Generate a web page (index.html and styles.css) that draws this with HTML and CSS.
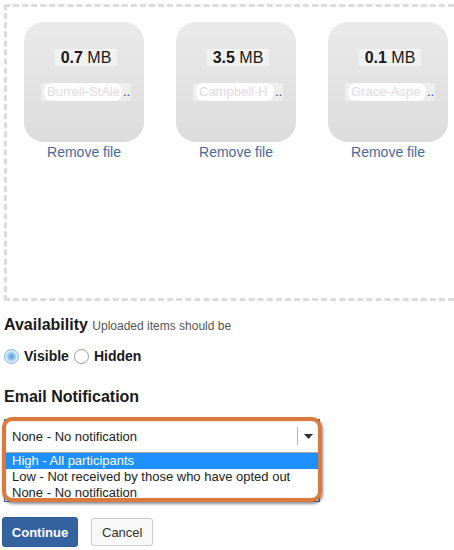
FILE: index.html
```html
<!DOCTYPE html>
<html>
<head>
<meta charset="utf-8">
<link rel="stylesheet" href="styles.css">
</head>
<body>
<div class="dropzone">
  <div class="previews">
    <div class="preview">
      <div class="thumb">
        <div class="size"><span><strong>0.7</strong> MB</span></div>
        <div class="fname"><span class="pill">Burrell-StAle</span><span class="dots">..</span></div>
      </div>
      <a class="remove" href="#">Remove file</a>
    </div>
    <div class="preview">
      <div class="thumb">
        <div class="size"><span><strong>3.5</strong> MB</span></div>
        <div class="fname"><span class="pill">Campbell-H</span><span class="dots">..</span></div>
      </div>
      <a class="remove" href="#">Remove file</a>
    </div>
    <div class="preview">
      <div class="thumb">
        <div class="size"><span><strong>0.1</strong> MB</span></div>
        <div class="fname"><span class="pill">Grace-Aspe</span><span class="dots">..</span></div>
      </div>
      <a class="remove" href="#">Remove file</a>
    </div>
  </div>
</div>

<div class="form">
  <h3 class="title">Availability <span class="hint">Uploaded items should be</span></h3>
  <div class="radios">
    <label class="radio"><input type="radio" name="avail" checked><span>Visible</span></label>
    <label class="radio"><input type="radio" name="avail"><span>Hidden</span></label>
  </div>

  <h3 class="title email">Email Notification</h3>
  <div class="select-wrap">
    <div class="select">
      <span class="value">None - No notification</span>
      <span class="sep"></span>
      <svg class="arrow" width="9" height="5" viewBox="0 0 9 5"><path d="M0 0H9L4.5 5Z" fill="#333"/></svg>
    </div>
    <ul class="listbox">
      <li class="active">High - All participants</li>
      <li>Low - Not received by those who have opted out</li>
      <li>None - No notification</li>
    </ul>
    <div class="callout"></div>
  </div>

  <div class="actions">
    <button class="btn primary">Continue</button>
    <button class="btn">Cancel</button>
  </div>
</div>
</body>
</html>
```

FILE: styles.css
```css
html, body {
  margin: 0;
  padding: 0;
  overflow: hidden;
  background: #fff;
  font-family: "Liberation Sans", Arial, sans-serif;
  color: #222;
}

.dropzone {
  margin: 4px 0 0 4px;
  width: calc(100% - 4px);
  height: 297px;
  box-sizing: border-box;
  border: 3px dashed #dcdcdc;
  border-right: none;
}

.previews {
  display: flex;
  gap: 32px;
  padding: 15px 0 0 17px;
}

.preview {
  width: 120px;
  display: flex;
  flex-direction: column;
  align-items: center;
}

.thumb {
  width: 120px;
  height: 120px;
  box-sizing: border-box;
  border-radius: 20px;
  background: linear-gradient(to bottom, #eaeaea, #dcdcdc);
  padding: 24px 0 0 17px;
}

.size {
  width: 90px;
  text-align: center;
  font-size: 16px;
  line-height: 24px;
  margin-bottom: 13px;
  color: #1a1a1a;
}

.size span {
  background: rgba(255, 255, 255, 0.45);
  padding: 0 6px;
}

.fname {
  display: flex;
  align-items: center;
  width: 90px;
  height: 18px;
  box-sizing: border-box;
  padding-left: 3px;
  white-space: nowrap;
  background: rgba(255, 255, 255, 0.4);
  font-size: 13px;
  line-height: 18px;
}

.pill {
  flex: none;
  width: 78px;
  box-sizing: border-box;
  padding: 0 3px;
  border-radius: 8px;
  background: rgba(255, 255, 255, 0.85);
  color: #e2dce2;
}

.dots {
  color: #1e4590;
  padding-left: 1px;
}

.remove {
  margin-top: 2px;
  font-size: 14px;
  line-height: 16px;
  color: #4a68a0;
  text-decoration: none;
}

.form {
  padding-left: 4px;
}

.title {
  margin: 14px 0 0 0;
  font-size: 16px;
  line-height: 20px;
  font-weight: bold;
  color: #1a1a1a;
}

.hint {
  font-size: 12px;
  font-weight: normal;
  color: #555;
}

.radios {
  display: flex;
  align-items: center;
  margin-top: 11px;
  height: 18px;
  gap: 5px;
}

.radio {
  display: flex;
  align-items: center;
  gap: 5px;
  font-size: 14px;
  font-weight: bold;
  line-height: 18px;
  color: #1a1a1a;
}

.radio input {
  -webkit-appearance: none;
  appearance: none;
  margin: 0;
  width: 15px;
  height: 15px;
  border-radius: 50%;
  border: 1px solid #9a9a9a;
  background: #fff;
  box-sizing: border-box;
}

.radio input:checked {
  border-color: #7eb4e2;
  background: radial-gradient(circle, #4f9ad8 0, #7fb8e6 2.5px, #d8e9f7 5.5px, #eef5fb 7px);
}

.email {
  margin-top: 22px;
}

.select-wrap {
  position: relative;
  margin-top: 12px;
  width: 316px;
  border: 1px solid #3a6cb0;
  box-sizing: border-box;
  background: #fff;
}

.select {
  display: flex;
  align-items: center;
  height: 32px;
  padding: 0 6px 0 7px;
  font-size: 13px;
  border-bottom: 1px solid #a8a8a8;
}

.value {
  flex: 1;
  padding-top: 1px;
}

.sep {
  width: 1px;
  height: 18px;
  background: #b4b4b4;
  margin-right: 6px;
}

.listbox {
  list-style: none;
  margin: 0;
  padding: 0;
  font-size: 13px;
}

.listbox li {
  height: 16px;
  line-height: 16px;
  padding-left: 7px;
  white-space: nowrap;
}

.listbox li.active {
  background: #1e90ff;
  color: #fff;
}

.callout {
  position: absolute;
  left: -3px;
  top: -3px;
  width: 320px;
  height: 85px;
  box-sizing: border-box;
  border: 4px solid #da7a3c;
  border-radius: 10px;
  box-shadow: 1px 2px 3px rgba(20, 30, 50, 0.5), inset 0 0 1px rgba(90, 40, 10, 0.5);
}

.actions {
  display: flex;
  align-items: center;
  gap: 13px;
  margin: 15px 0 0 -2px;
}

.btn {
  font-family: "Liberation Sans", Arial, sans-serif;
  font-size: 13px;
  height: 28px;
  padding: 0 10px;
  border: 1px solid #cccccc;
  border-radius: 3px;
  background: #f8f8f8;
  color: #333;
}

.btn.primary {
  height: 30px;
  width: 76px;
  padding: 0;
  font-weight: bold;
  color: #fff;
  background: #3463a0;
  border-color: #2d5a94;
}
```
